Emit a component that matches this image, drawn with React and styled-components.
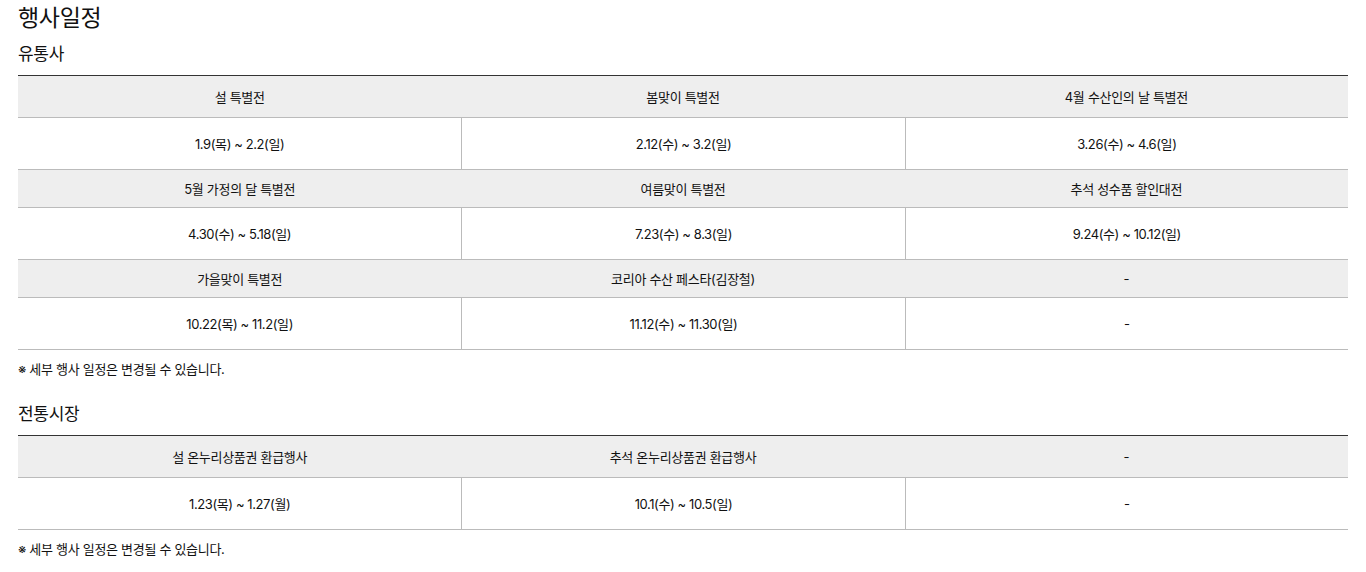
import React from "react";
import styled, { createGlobalStyle } from "styled-components";

const sections = [
  {
    title: "유통사",
    rows: [
      {
        names: ["설 특별전", "봄맞이 특별전", "4월 수산인의 날 특별전"],
        dates: ["1.9(목) ~ 2.2(일)", "2.12(수) ~ 3.2(일)", "3.26(수) ~ 4.6(일)"],
      },
      {
        names: ["5월 가정의 달 특별전", "여름맞이 특별전", "추석 성수품 할인대전"],
        dates: ["4.30(수) ~ 5.18(일)", "7.23(수) ~ 8.3(일)", "9.24(수) ~ 10.12(일)"],
      },
      {
        names: ["가을맞이 특별전", "코리아 수산 페스타(김장철)", "-"],
        dates: ["10.22(목) ~ 11.2(일)", "11.12(수) ~ 11.30(일)", "-"],
      },
    ],
  },
  {
    title: "전통시장",
    rows: [
      {
        names: ["설 온누리상품권 환급행사", "추석 온누리상품권 환급행사", "-"],
        dates: ["1.23(목) ~ 1.27(월)", "10.1(수) ~ 10.5(일)", "-"],
      },
    ],
  },
];

const App = () => {
  return (
    <>
      <GlobalStyle />
      <Page>
        <Title>행사일정</Title>
        {sections.map((section, si) => (
          <Section key={section.title} $first={si === 0}>
            <SectionTitle>{section.title}</SectionTitle>
            <Table>
              {section.rows.map((row, ri) => (
                <React.Fragment key={ri}>
                  <HeadRow $first={ri === 0}>
                    {row.names.map((n, i) => (
                      <HeadCell key={i}>{n}</HeadCell>
                    ))}
                  </HeadRow>
                  <BodyRow>
                    {row.dates.map((d, i) => (
                      <BodyCell key={i}>{d}</BodyCell>
                    ))}
                  </BodyRow>
                </React.Fragment>
              ))}
            </Table>
            <Note>※ 세부 행사 일정은 변경될 수 있습니다.</Note>
          </Section>
        ))}
      </Page>
    </>
  );
};

const GlobalStyle = createGlobalStyle`
  body {
    margin: 0;
    background: #fff;
    color: #111;
    font-family: Inter, "Noto Sans CJK KR", sans-serif;
  }
`;

const Page = styled.div`
  padding: 2px 18px 0;
`;

const Title = styled.h1`
  font-size: 23px;
  font-weight: 400;
  line-height: 32px;
  margin: 0;
  letter-spacing: -0.3px;
`;

const Section = styled.section`
  margin-top: ${(p) => (p.$first ? "8px" : "25px")};
`;

const SectionTitle = styled.h2`
  font-size: 17px;
  font-weight: 400;
  line-height: 24px;
  margin: 0 0 9px;
  letter-spacing: -0.3px;
`;

const Table = styled.div`
  border-top: 1px solid #333;
`;

const HeadRow = styled.div`
  display: grid;
  grid-template-columns: repeat(3, 1fr);
  height: ${(p) => (p.$first ? "41px" : "37px")};
  background: #eee;
  border-bottom: 1px solid #bbb;
`;

const HeadCell = styled.div`
  display: flex;
  align-items: center;
  justify-content: center;
  font-size: 13px;
  letter-spacing: -0.3px;
`;

const BodyRow = styled.div`
  display: grid;
  grid-template-columns: repeat(3, 1fr);
  height: 51px;
  border-bottom: 1px solid #bbb;
`;

const BodyCell = styled.div`
  display: flex;
  align-items: center;
  justify-content: center;
  font-size: 13px;
  letter-spacing: -0.4px;
  & + & {
    border-left: 1px solid #bbb;
  }
`;

const Note = styled.p`
  margin: 11px 0 0;
  font-size: 13px;
  line-height: 16px;
  letter-spacing: -0.3px;
`;

export default App;
